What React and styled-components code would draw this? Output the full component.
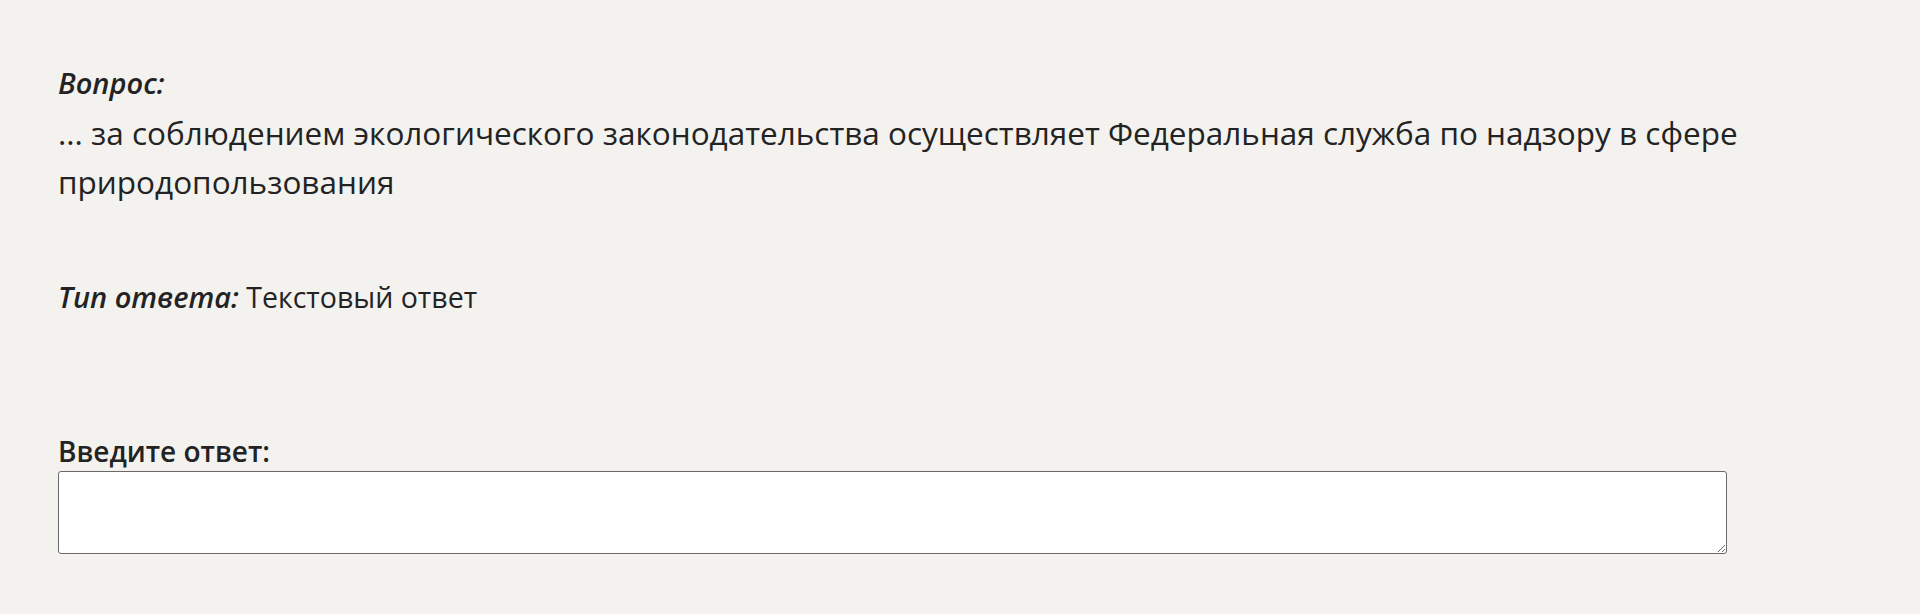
import React, { useState } from "react";
import styled, { createGlobalStyle } from "styled-components";

const GlobalStyle = createGlobalStyle`
  html, body {
    margin: 0;
    padding: 0;
    background: #f3f2ef;
  }
  body {
    font-family: "Open Sans", "Noto Sans", "DejaVu Sans", sans-serif;
    color: #232323;
  }
`;

const Page = styled.div`
  padding: 57px 0 40px 58px;
  width: 1700px;
`;

const Block = styled.section`
  margin: ${(p) => p.$mt || 0}px 0 0;
  font-size: ${(p) => p.$size || 29}px;
  line-height: 49px;
`;

const Label = styled.span`
  font-style: italic;
  font-weight: 600;
  font-size: 29px;
  display: ${(p) => (p.$block ? "block" : "inline")};
  line-height: ${(p) => (p.$block ? "51px" : "inherit")};
`;

const Question = styled.div`
  font-size: 31.5px;
  font-weight: 400;
`;

const AnswerLabel = styled.label`
  display: block;
  font-size: 28px;
  font-weight: 600;
  line-height: 39px;
`;

const AnswerBox = styled.textarea`
  display: block;
  box-sizing: border-box;
  width: 1669px;
  height: 83px;
  margin: 0;
  padding: 8px 10px;
  background: #fff;
  border: 1px solid #6a6a6a;
  border-radius: 3px;
  font-family: inherit;
  font-size: 24px;
  color: #232323;
  resize: vertical;
  outline: none;
`;

export default function App() {
  const [answer, setAnswer] = useState("");

  return (
    <>
      <GlobalStyle />
      <Page>
        <Block>
          <Label $block>Вопрос:</Label>
          <Question>
            ... за соблюдением экологического законодательства осуществляет
            Федеральная служба по надзору в сфере природопользования
          </Question>
        </Block>
        <Block $mt={66} $size={28.5}>
          <Label>Тип ответа:</Label> Текстовый ответ
        </Block>
        <Block $mt={110}>
          <AnswerLabel htmlFor="answer">Введите ответ:</AnswerLabel>
          <AnswerBox
            id="answer"
            value={answer}
            onChange={(e) => setAnswer(e.target.value)}
          />
        </Block>
      </Page>
    </>
  );
}
